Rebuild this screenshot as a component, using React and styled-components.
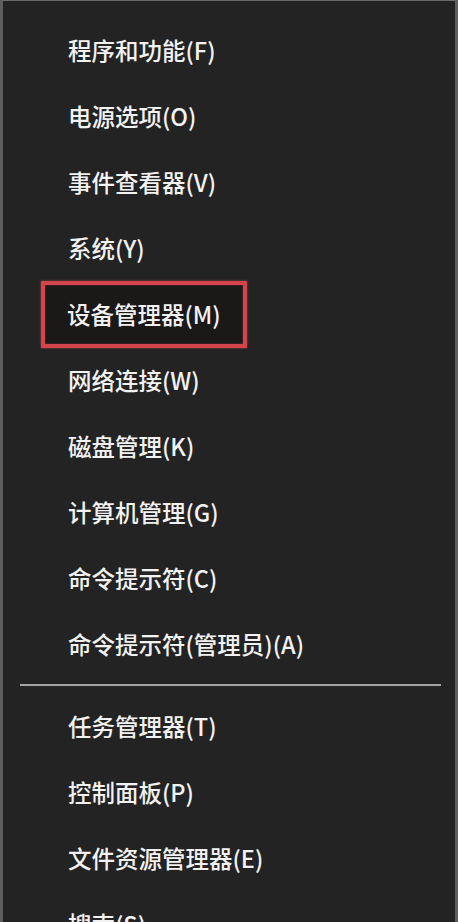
import React from "react";
import styled, { createGlobalStyle } from "styled-components";

const GlobalStyle = createGlobalStyle`
  html, body {
    margin: 0;
    padding: 0;
    background: #232323;
  }
  * {
    box-sizing: border-box;
  }
`;

const topItems = [
  { label: "程序和功能(F)" },
  { label: "电源选项(O)" },
  { label: "事件查看器(V)" },
  { label: "系统(Y)" },
  { label: "设备管理器(M)", marked: true },
  { label: "网络连接(W)" },
  { label: "磁盘管理(K)" },
  { label: "计算机管理(G)" },
  { label: "命令提示符(C)" },
  { label: "命令提示符(管理员)(A)" },
];

const bottomItems = [
  { label: "任务管理器(T)" },
  { label: "控制面板(P)" },
  { label: "文件资源管理器(E)" },
  { label: "搜索(S)" },
];

const App = () => {
  return (
    <>
      <GlobalStyle />
      <Menu>
        {topItems.map((item) => (
          <Item key={item.label}>
            <Label $marked={item.marked}>{item.label}</Label>
          </Item>
        ))}
        <Separator />
        {bottomItems.map((item) => (
          <Item key={item.label}>
            <Label>{item.label}</Label>
          </Item>
        ))}
      </Menu>
    </>
  );
};

export default App;

const Menu = styled.div`
  height: 100vh;
  overflow: hidden;
  background: #232323;
  border-left: 3px solid #5e5e5e;
  border-right: 3px solid #5e5e5e;
  border-top: 1px solid #6a6a6a;
  padding-top: 16px;
  display: flex;
  flex-direction: column;
  font-family: "Noto Sans CJK SC", "Noto Sans", sans-serif;
`;

const Item = styled.div`
  flex: 0 0 66px;
  height: 66px;
  display: flex;
  align-items: center;
  padding-left: 65px;
  color: #f2f2f2;
  font-size: 23.5px;
  font-weight: 500;
  white-space: nowrap;
`;

const Label = styled.span`
  display: inline-flex;
  align-items: center;
  ${({ $marked }) =>
    $marked &&
    `
    height: 67px;
    margin-left: -27px;
    padding: 0 22px 0 22px;
    border: 4px solid #d3444b;
    background: #1b1818;
    box-shadow: 0 0 2px rgba(230, 90, 95, 0.6), inset 0 0 2px rgba(230, 90, 95, 0.5);
  `}
`;

const Separator = styled.div`
  flex: 0 0 16px;
  display: flex;
  align-items: center;
  margin: 0 14px 0 17px;
  &::after {
    content: "";
    flex: 1;
    height: 2px;
    background: #a3a3a3;
  }
`;
